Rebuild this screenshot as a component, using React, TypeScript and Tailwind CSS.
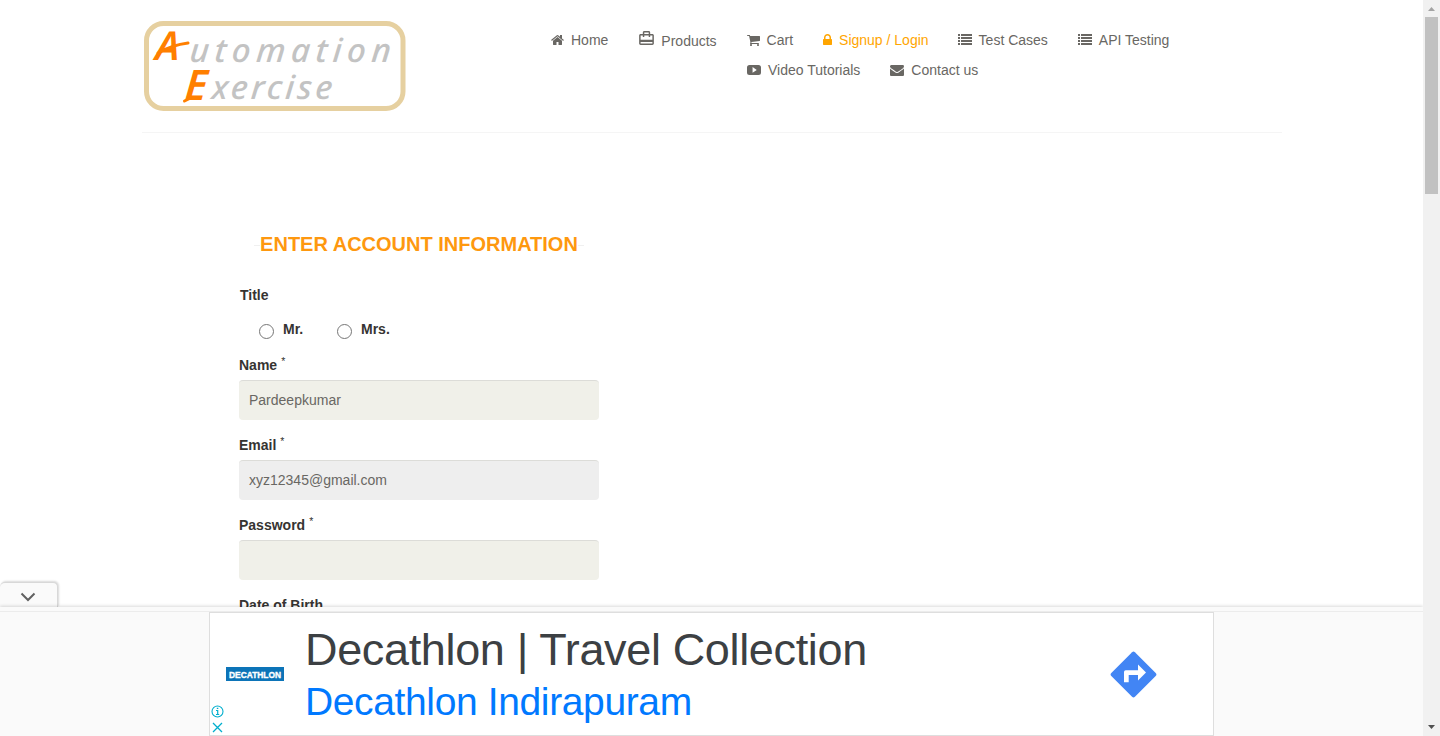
import type { ReactNode } from "react";

const paths = {
  home: "M1472 992v480q0 26-19 45t-45 19h-384v-384h-256v384h-384q-26 0-45-19t-19-45v-480q0-1 .5-3t.5-3l575-474 575 474q1 2 1 6zm223-69l-62 74q-8 9-21 11h-3q-13 0-21-7l-692-577-692 577q-12 8-24 7-13-2-21-11l-62-74q-8-10-7-23.5t11-21.5l719-599q32-26 76-26t76 26l244 204v-195q0-14 9-23t23-9h192q14 0 23 9t9 23v408l219 182q10 8 11 21.5t-7 23.5z",
  cart: "M704 1536q0 52-38 90t-90 38-90-38-38-90 38-90 90-38 90 38 38 90zm896 0q0 52-38 90t-90 38-90-38-38-90 38-90 90-38 90 38 38 90zm128-1088v512q0 24-16.5 42.5t-40.5 21.5l-1044 122q13 60 13 70 0 16-24 64h920q26 0 45 19t19 45-19 45-45 19h-1024q-26 0-45-19t-19-45q0-11 8-31.5t16-36 21.5-40 15.5-29.5l-177-823h-204q-26 0-45-19t-19-45 19-45 45-19h256q16 0 28.5 6.5t19.5 15.5 13 24.5 8 26 5.5 29.5 4.5 26h1201q26 0 45 19t19 45z",
  lock: "M640 768h512v-192q0-106-75-181t-181-75-181 75-75 181v192zm832 96v576q0 40-28 68t-68 28h-960q-40 0-68-28t-28-68v-576q0-40 28-68t68-28h32v-192q0-184 132-316t316-132 316 132 132 316v192h32q40 0 68 28t28 68z",
  list: "M0 256h256v256H0zM384 256h1408v256H384zM0 640h256v256H0zM384 640h1408v256H384zM0 1024h256v256H0zM384 1024h1408v256H384zM0 1408h256v256H0zM384 1408h1408v256H384z",
  video: "M320 256h1152q320 0 320 320v640q0 320-320 320H320q-320 0-320-320V576q0-320 320-320zM711 520v740l540-370z",
  envelope: "M1792 710v794q0 66-47 113t-113 47h-1472q-66 0-113-47t-47-113v-794q44 49 101 87 362 246 497 345 57 42 92.5 65.5t94.5 48 110 24.5h2q51 0 110-24.5t94.5-48 92.5-65.5q170-123 498-345 57-39 100-87zm0-294q0 79-49 151t-122 123q-376 261-468 325-10 7-42.5 31t-54 38.5-52 32.5-57.5 27-50 9h-2q-23 0-50-9t-57.5-27-52-32.5-54-38.5-42.5-31q-91-64-262-182.5t-205-142.5q-62-42-117-115.5t-55-136.5q0-78 41.5-130t118.5-52h1472q65 0 112.5 47t47.5 113z",
};

function Icon({ name }: { name: keyof typeof paths }) {
  if (name === "lock") {
    return (
      <svg width="9" height="14" viewBox="320 0 1152 1792" fill="currentColor">
        <path d={paths.lock} />
      </svg>
    );
  }
  const narrow = name === "home" || name === "cart";
  return (
    <svg
      width={narrow ? 13 : 14}
      height="14"
      viewBox={narrow ? "64 0 1664 1792" : name === "list" ? "0 128 1792 1792" : "0 0 1792 1792"}
      fill="currentColor"
      fillRule="evenodd"
    >
      <path d={paths[name]} />
    </svg>
  );
}

function NavItem({ icon, children, active }: { icon: keyof typeof paths; children: ReactNode; active?: boolean }) {
  return (
    <a className={`flex h-[30px] items-center gap-[7px] whitespace-nowrap ${active ? "text-[#ffa500]" : "text-[#696763]"}`}>
      <Icon name={icon} />
      <span>{children}</span>
    </a>
  );
}

function Logo() {
  return (
    <svg width="263" height="91" viewBox="143 20 263 91" className="mt-5 ml-[1px] shrink-0">
      <rect x="146.500" y="23.5" width="256.500" height="85" rx="17" fill="#fff" stroke="#e6d0a0" strokeWidth="5" />
      <g fontFamily="'Noto Sans', 'Open Sans', sans-serif" fontStyle="italic" fontWeight="500" fontSize="33" fill="#c3c3c3">
        <text transform="translate(189 62) skewX(-5)" textLength="204" letterSpacing="3">utomation</text>
        <text transform="translate(211 99) skewX(-5)" textLength="122" letterSpacing="1.500">xercise</text>
      </g>
      <g fontFamily="'Noto Sans', 'Open Sans', sans-serif" fontStyle="italic" fontWeight="600" fill="#ff7f00">
        <text transform="translate(155 60) skewX(-3)" fontSize="40">A</text>
        <text transform="translate(184 100) skewX(-4)" fontSize="42">E</text>
      </g>
      <g fill="none" stroke="#ff7f00" strokeWidth="3" strokeLinecap="round">
        <path d="M158 53Q172 45 188 43" />
        <path d="M184.500 101l6-3" />
      </g>
    </svg>
  );
}

function Field({ label, value, disabled }: { label: string; value: string; disabled?: boolean }) {
  return (
    <div className="h-20">
      <label className="flex h-[25px] leading-5 font-bold text-[#363432]">
        {label}
        <span className="ml-1 -mt-1 text-[10.5px] font-normal">*</span>
      </label>
      <div
        className={`flex h-10 items-center rounded-[4px] border-t border-[#dcdcd8] px-2.5 pb-[1px] text-[#696763] ${disabled ? "bg-[#eeeeee]" : "bg-[#f0f0e9]"}`}
      >
        {value}
      </div>
    </div>
  );
}

function Radio({ label }: { label: string }) {
  return (
    <label className="flex w-[78px] items-start font-bold text-[#363432]">
      <span className="mt-[5px] mr-[9px] h-[15px] w-[15px] rounded-full border border-[#767676] bg-white" />
      <span className="leading-5">{label}</span>
    </label>
  );
}

function Ad() {
  return (
    <div className="absolute bottom-0 left-0 w-full">
      <div className="flex h-[25px] w-[58px] items-center justify-center rounded-t-[5px] border-t border-r border-[#d8d8d8] bg-[#fafafa] pt-1 pr-[2px] shadow-[1px_-1px_2px_rgba(0,0,0,0.15)]">
        <svg width="16" height="10" viewBox="0 0 16 10" fill="none" stroke="#616161" strokeWidth="2">
          <path d="M1.5 1.5L8 8l6.5-6.5" />
        </svg>
      </div>
      <div className="relative h-[129px] bg-[#fafafa] shadow-[0_-1px_3px_rgba(0,0,0,0.15)]">
        <div className="h-[5px] border-b border-[#ececec]" />
        <div className="ml-[209px] flex h-[124px] w-[1005px] border border-[#dedede] bg-white">
          <div className="flex w-[95px] shrink-0 flex-col">
            <div className="mt-[54px] ml-4 flex h-[14px] w-[58px] items-center justify-center bg-[#0c74b8]">
              <svg width="54" height="14" viewBox="0 0 54 14">
                <text x="1" y="10.500" textLength="52" lengthAdjust="spacingAndGlyphs" fontFamily="Liberation Sans, sans-serif" fontWeight="700" fontSize="9.500" fill="#fff" stroke="#fff" strokeWidth=".4">DECATHLON</text>
              </svg>
            </div>
            <svg className="mt-6 ml-[1px]" width="13" height="13" viewBox="0 0 13 13" fill="none" stroke="#00aecd">
              <circle cx="6.5" cy="6.5" r="5.5" strokeWidth="1.1" />
              <path d="M5 5.5h1.7v4M5 9.5h3.2M5.8 3.4h1.5" strokeWidth="1.2" />
            </svg>
            <svg className="mt-1 ml-[1px]" width="13" height="11" viewBox="0 0 13 11" fill="none" stroke="#00aecd" strokeWidth="1.3">
              <path d="M2 1l9 9M11 1l-9 9" />
            </svg>
          </div>
          <div className="w-[800px] pt-[11px] whitespace-nowrap">
            <div className="h-[52px] text-[45px] leading-[52px] tracking-[-0.35px] text-[#3c4043]">Decathlon | Travel Collection</div>
            <div className="h-[52px] text-[39px] leading-[52px] tracking-[-0.37px] text-[#0079ff]">Decathlon Indirapuram</div>
          </div>
          <svg className="mt-[38px] ml-[4px] shrink-0" width="48" height="48" viewBox="0 0 48 48">
            <rect x="7.300" y="7.300" width="33.400" height="33.400" rx="2" transform="translate(.5 -.5) rotate(45 24 24)" fill="#4285f4" />
            <path d="M15 31.200V21q0-1.700 1.700-1.700H29V13.5l8 8-8 8V24H19.700v7.200z" fill="#fff" />
          </svg>
        </div>
      </div>
    </div>
  );
}

export default function App() {
  return (
    <div className="flex h-[736px] w-[1440px] overflow-hidden bg-white font-['Liberation_Sans',Arial,sans-serif] text-sm">
      <div className="relative h-full w-[1423px] overflow-hidden">
        <header className="ml-[142px] flex h-[133px] w-[1140px] border-b border-[#f5f5f5]">
          <Logo />
          <nav className="ml-[145px] pt-[25px]">
            <div className="flex gap-[30px]">
              <NavItem icon="home">Home</NavItem>
              <a className="ml-[1px] flex h-[30px] items-center whitespace-nowrap text-[#696763]">
                <svg className="-mt-[5px] mr-[7px]" width="15" height="14" viewBox="2 2 20 19" fill="currentColor">
                  <path d="M20 6h-3V4c0-1.110-.890-2-2-2H9c-1.110 0-2 .890-2 2v2H4c-1.110 0-2 .890-2 2v11c0 1.110.890 2 2 2h16c1.110 0 2-.890 2-2V8c0-1.110-.890-2-2-2zM9 4h6v2H9V4zm11 15H4v-2h16v2zm0-5H4V8h3v2h2V8h6v2h2V8h3v6z" />
                </svg>
                <span className="pt-[2px]">Products</span>
              </a>
              <NavItem icon="cart">Cart</NavItem>
              <NavItem icon="lock" active>Signup / Login</NavItem>
              <div className="-ml-[1px] flex gap-[30px]">
                <NavItem icon="list">Test Cases</NavItem>
                <NavItem icon="list">API Testing</NavItem>
              </div>
            </div>
            <div className="ml-[196px] flex gap-[30px]">
              <NavItem icon="video">Video Tutorials</NavItem>
              <NavItem icon="envelope">Contact us</NavItem>
            </div>
          </nav>
        </header>
        <main className="ml-[239px] w-[360px] pt-[99px]">
          <h2 className="ml-[15px] flex h-6 w-[330px] items-center justify-center bg-[linear-gradient(#f0f0f0,#f0f0f0)] bg-[length:100%_1px] bg-[position:0_13px] bg-no-repeat text-xl font-bold whitespace-nowrap text-[#fe980f]">
            <span className="bg-white">ENTER ACCOUNT INFORMATION</span>
          </h2>
          <p className="mt-[29px] ml-[1px] leading-5 font-bold text-[#363432]">Title</p>
          <div className="mt-[14px] ml-5 flex h-[36px]">
            <Radio label="Mr." />
            <Radio label="Mrs." />
          </div>
          <Field label="Name" value="Pardeepkumar" />
          <Field label="Email" value="xyz12345@gmail.com" disabled />
          <Field label="Password" value="" />
          <p className="leading-5 font-bold text-[#363432]">Date of Birth</p>
        </main>
        <Ad />
      </div>
      <div className="flex w-[17px] shrink-0 flex-col items-center bg-[#f1f1f1]">
        <svg width="17" height="17" viewBox="0 0 17 17">
          <path d="M5 11h7L8.500 7z" fill="#a3a3a3" />
        </svg>
        <div className="h-[177px] w-[13px] bg-[#c1c1c1]" />
        <svg className="mt-auto" width="17" height="17" viewBox="0 0 17 17">
          <path d="M5 6h7L8.500 10z" fill="#505050" />
        </svg>
      </div>
    </div>
  );
}
